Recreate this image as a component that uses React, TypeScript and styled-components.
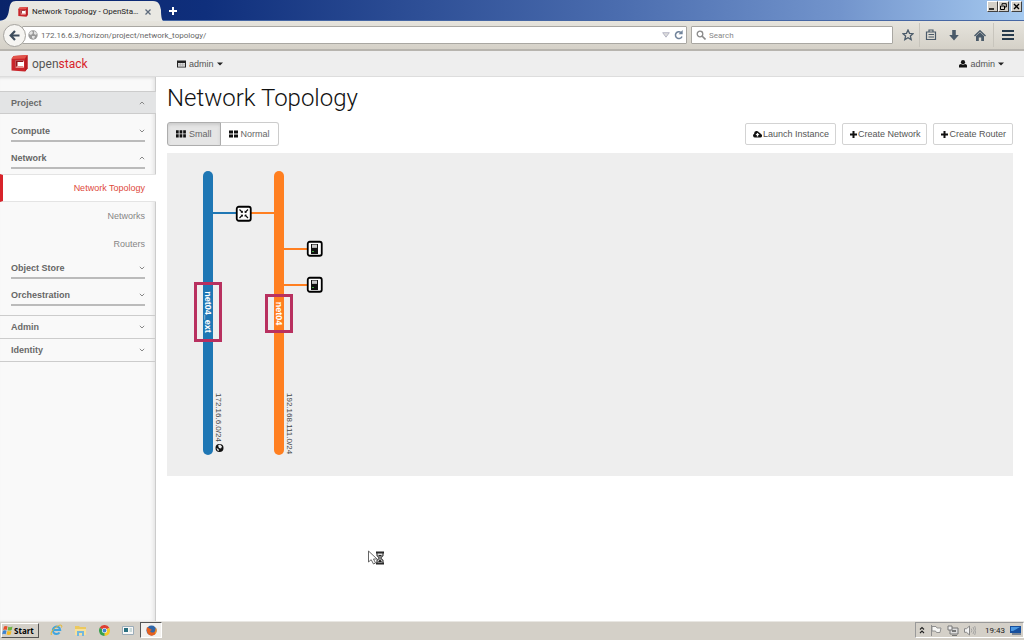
import React from 'react';
import styled, { createGlobalStyle, css } from 'styled-components';

const GlobalStyle = createGlobalStyle`
  *, *::before, *::after { box-sizing: border-box; }
  body { margin: 0; background: #fff; font-family: "Liberation Sans", Arial, sans-serif; font-size: 9px; color: #555; }
  button, input { font: inherit; color: inherit; }
  button { padding: 0; margin: 0; border: 0; background: none; }
  a { color: inherit; text-decoration: none; }
  ul { list-style: none; margin: 0; padding: 0; }
  svg { display: block; flex: none; }
`;

const uiFont = 'Roboto, "Open Sans", sans-serif';

const Screen = styled.div`
  min-height: 100vh;
  display: flex;
  flex-direction: column;
`;

/* Browser window */
const TitleBar = styled.header`
  height: 21px;
  display: flex;
  align-items: flex-end;
  background: linear-gradient(90deg, #0a246a 0%, #0f2f7c 20%, #4a6cae 60%, #7294cc 82%, #a6caf0 100%);
  border-bottom: 1px solid #4667a4;
  font-family: ${uiFont};
`;
const Tab = styled.div`
  position: relative;
  width: 163px;
  height: 21px;
  margin-bottom: -1px;
  display: flex;
  align-items: center;
  font-size: 8px;
  color: #222;
`;
const TabShape = styled.svg`
  position: absolute;
  inset: 0;
`;
const TabContent = styled.div`
  position: relative;
  flex: 1;
  display: flex;
  align-items: center;
  gap: 4px;
  padding: 2px 12px 0 18px;
`;
const TabTitle = styled.span`
  flex: 1;
  white-space: nowrap;
`;
const IconButton = styled.button`
  display: flex;
  align-items: center;
  justify-content: center;
`;
const NewTab = styled(IconButton)`
  width: 20px;
  height: 18px;
`;
const WindowButtons = styled.div`
  margin-left: auto;
  align-self: flex-start;
  display: flex;
  padding: 1px 2px 0 0;
`;
const WindowButton = styled.button<{ $apart?: boolean }>`
  width: 11px;
  height: 11px;
  margin-left: ${p => (p.$apart ? 2 : 0)}px;
  display: flex;
  align-items: center;
  justify-content: center;
  background: #d4d0c8;
  border: 1px solid;
  border-color: #fff #404040 #404040 #fff;
`;
const Toolbar = styled.nav`
  height: 30px;
  display: flex;
  align-items: center;
  padding: 0 3px;
  background: linear-gradient(#e6e4dd, #d5d1c8);
  border-bottom: 2px solid #b7b4ae;
  font-family: ${uiFont};
  font-size: 8px;
`;
const BackButton = styled(IconButton)`
  position: relative;
  z-index: 1;
  width: 23px;
  height: 23px;
  border: 1px solid #a5a39e;
  border-radius: 50%;
  background: #f6f5f2;
`;
const Field = styled.label<{ $url?: boolean }>`
  height: 18px;
  display: flex;
  align-items: center;
  gap: 3px;
  background: #fff;
  border: 1px solid #a9a7a2;
  border-radius: 1px;
  ${p => p.$url
    ? css`flex: 1; margin-left: -4px; padding: 0 1px 0 5px;`
    : css`flex: 0 0 202px; margin-left: 4px; padding: 0 4px;`}
`;
const TextInput = styled.input`
  flex: 1;
  min-width: 0;
  height: 16px;
  padding: 0;
  border: 0;
  outline: 0;
  background: transparent;
  color: #666;
  &::placeholder { color: #888; opacity: 1; }
`;
const ToolButtons = styled.div`
  display: flex;
  align-items: center;
  margin-left: 4px;
`;
const ToolButton = styled(IconButton)<{ $width: number; $divided?: boolean }>`
  width: ${p => p.$width}px;
  height: 24px;
  border-left: ${p => (p.$divided ? '1px solid #c8c5bd' : '0')};
`;

/* Dashboard */
const TopBar = styled.header`
  height: 26px;
  display: flex;
  align-items: center;
  padding: 0 20px 0 11px;
  background: #eee;
  border-bottom: 1px solid #ddd;
`;
const Brand = styled.a`
  width: 166px;
  display: flex;
  align-items: center;
  gap: 4px;
  font: 12px Roboto, "Liberation Sans", sans-serif;
  line-height: 18px;
`;
const Stack = styled.span`
  color: #d8232a;
`;
const MenuButton = styled.button<{ $end?: boolean }>`
  display: flex;
  align-items: center;
  gap: 3px;
  margin-left: ${p => (p.$end ? 'auto' : '0')};
`;
const Body = styled.div`
  flex: 1;
  display: flex;
`;
const Sidebar = styled.nav`
  flex: 0 0 156px;
  padding-top: 14px;
  background: #f9f9f9;
  box-shadow: inset -1px 0 #ccc, inset -4px 0 4px -2px #ddd, inset 0 3px 3px -2px #ddd;
`;
const PanelButton = styled.button<{ $open?: boolean }>`
  width: 100%;
  height: 23px;
  display: flex;
  align-items: center;
  justify-content: space-between;
  padding: 0 11px;
  font-weight: bold;
  color: #6a6a6a;
  border-top: 1px solid #ccc;
  ${p => p.$open && css`
    background: #e3e4e5;
    border-bottom: 1px solid #ccc;
  `}
`;
const PanelFoot = styled.div`
  border-top: 1px solid #ccc;
`;
const Groups = styled.div`
  padding: 8px 0 2px;
`;
const GroupButton = styled.button<{ $open?: boolean }>`
  width: calc(100% - 22px);
  height: 20px;
  display: flex;
  align-items: center;
  justify-content: space-between;
  margin: 0 11px ${p => (p.$open ? 0 : 7)}px;
  font-weight: bold;
  color: #666;
  border-bottom: 2px solid #bbb;
`;
const Links = styled.ul`
  padding: 5px 0 1px;
`;
const SideLink = styled.a<{ $active?: boolean }>`
  height: 28px;
  display: flex;
  align-items: center;
  justify-content: flex-end;
  padding: 0 11px;
  color: #868686;
  ${p => p.$active && css`
    color: #de4a3c;
    background: #fff;
    border-left: 3px solid #d8232a;
    border-bottom: 1px solid #e4e4e4;
    border-top: 1px solid #e4e4e4;
  `}
`;
const Main = styled.main`
  flex: 1;
  min-width: 0;
  padding: 5px 11px;
`;
const Title = styled.h1`
  margin: 0;
  font: 300 24px Roboto, sans-serif;
  line-height: 32px;
  color: #111;
`;
const Actions = styled.div`
  display: flex;
  align-items: center;
  justify-content: space-between;
  margin: 8px 0 7px;
`;
const ButtonRow = styled.div<{ $gap?: number }>`
  display: flex;
  gap: ${p => p.$gap ?? 0}px;
`;
const SizeButton = styled.button<{ $pressed?: boolean }>`
  height: 24px;
  display: flex;
  align-items: center;
  gap: 3px;
  padding: 0 8px;
  border: 1px solid #ccc;
  border-radius: 0 3px 3px 0;
  color: #666;
  background: #fff;
  & + & { border-left: 0; }
  ${p => p.$pressed && css`
    background: #e5e5e5;
    border-color: #adadad;
    border-radius: 3px 0 0 3px;
    box-shadow: inset 0 2px 3px #ccc;
  `}
`;
const ActionButton = styled.button`
  height: 22px;
  display: flex;
  align-items: center;
  gap: 1px;
  padding: 0 6px 0 7px;
  border: 1px solid #d3d3d3;
  border-radius: 2px;
  background: #fff;
  color: #555;
`;
const Canvas = styled.section`
  position: relative;
  height: 323px;
  background: #eee;
`;

/* Desktop */
const TaskBar = styled.footer`
  height: 19px;
  display: flex;
  align-items: center;
  padding-bottom: 2px;
  background: #d4d0c8;
  border-top: 1px solid #e9e7e3;
  font-family: ${uiFont};
`;
const StartButton = styled.button`
  height: 15px;
  width: 38px;
  display: flex;
  align-items: center;
  gap: 1px;
  margin: 0 5px 0 1px;
  border: 1px solid;
  border-color: #fff #555 #555 #fff;
  font-family: "Open Sans", sans-serif;
  font-size: 8px;
  font-weight: bold;
  color: #000;
`;
const TaskButton = styled(IconButton)<{ $running?: boolean }>`
  width: ${p => (p.$running ? 22 : 24)}px;
  height: 16px;
  ${p => p.$running && css`
    background: #f3f1ee;
    border: 1px solid;
    border-color: #555 #fff #fff #555;
  `}
`;
const Tray = styled.div`
  margin-left: auto;
  height: 16px;
  display: flex;
  align-items: center;
  gap: 5px;
  padding: 0 2px 0 3px;
  border: 1px solid;
  border-color: #999 #fff #fff #999;
  color: #222;
  font-size: 8px;
`;
const Clock = styled.time`
  padding-left: 4px;
`;
const Pointer = styled.svg`
  position: fixed;
  left: 367px;
  top: 549px;
`;

const StackLogo = ({ size }: { size: number }) => (
  <svg width={size} height={size} viewBox="0 0 17 17">
    <path d="M2.500 1 16.500 0 16.500 13.500 14 16.500 .5 15.500 .5 4Z" fill="#c9252b" />
    <path d="M2.500 1 16.500 0 14 3.500 .5 4Z" fill="#e2544b" />
    <path d="M14 3.500 16.500 0 16.500 13.500 14 16.500Z" fill="#b81c22" />
    <path d="M4.500 5.500H13V12.500H4.500Z" fill="#fff" />
    <path d="M4.500 5.500H13L12 7H6.500V11L4.500 12.500Z" fill="#931419" />
    <path d="M4.500 12.500 6.500 11H12L13 12.500Z" fill="#e98c86" />
  </svg>
);
const Caret = () => <svg width="6" height="4" viewBox="0 0 6 4"><path d="M0 .5h6L3 3.5z" fill="#222" /></svg>;
const Chevron = ({ up }: { up?: boolean }) => (
  <svg width="6" height="4" viewBox="0 0 6 4">
    <path d={up ? 'M.8 3.2 3 1 5.200 3.2' : 'M.8.8 3 3 5.200.8'} fill="none" stroke="#888" />
  </svg>
);
const Globe = ({ size = 10 }: { size?: number }) => (
  <svg width={size} height={size} viewBox="0 0 10 10">
    <circle cx="5" cy="5" r="4.700" fill="#9a9a9a" />
    <path d="M2 2 4 1 5 3 3 5 1 4ZM6 1 9 3 8 5 6 4ZM4 6 7 6 6 9 4 8Z" fill="#e3e3e3" />
  </svg>
);
const Plus = () => <svg width="7" height="7" viewBox="0 0 7 7"><path d="M3.500 0v7M0 3.500h7" stroke="#111" strokeWidth="2" /></svg>;

type Network = { x: number; color: string; name: string; cidr: string; boxY: number; boxH: number };
const networks: Network[] = [
  { x: 36, color: '#1f77b4', name: 'net04_ext', cidr: '172.16.6.0/24', boxY: 130.5, boxH: 57 },
  { x: 107, color: '#ff7f20', name: 'net04', cidr: '192.168.111.0/24', boxY: 142.5, boxH: 36 },
];
const servers = [96, 132];

const Topology = () => (
  <svg width="180" height="323" viewBox="0 0 180 323" role="img" aria-label="Network topology">
    <path d="M45 60h24" stroke="#1f77b4" strokeWidth="2" />
    <path d="M84 60h24" stroke="#ff7f20" strokeWidth="2" />
    {networks.map(n => (
      <g key={n.name}>
        <rect x={n.x} y="18" width="10" height="284" rx="5" fill={n.color} />
        <rect x={n.x - 7.5} y={n.boxY} width="25" height={n.boxH} fill="none" stroke="#b8305f" strokeWidth="3" />
        <text transform={`translate(${n.x + 2} ${n.boxY + n.boxH / 2}) rotate(90)`} textAnchor="middle" fontSize="9" fontWeight="bold" fill="#fff">{n.name}</text>
        <text transform={`translate(${n.x + 13} 240) rotate(90)`} fontSize="8" fill="#444">{n.cidr}</text>
      </g>
    ))}
    <circle cx="52.500" cy="295" r="4" fill="#111" />
    <path d="M51 292.500l2-1 2 2-1 2-2-.500zM49.500 295l2 1 .500 2-1.500-.500z" fill="#eee" />
    <g transform="translate(69 53)">
      <rect x=".75" y=".75" width="14" height="14" rx="2" fill="#fff" stroke="#000" strokeWidth="1.800" />
      <path d="M3.500 3.500l3 3M12 3.500l-3 3M3.500 12l3-3M12 12l-3-3" stroke="#111" strokeWidth="1.200" />
      <path d="M6.800 4.500v2.300H4.500zM8.700 4.500v2.300H11zM6.800 11V8.700H4.500zM8.700 11V8.700H11z" fill="#111" />
    </g>
    {servers.map(y => (
      <g key={y} transform={`translate(140 ${y - 8})`}>
        <path d="M-23 8H1" stroke="#ff7f20" strokeWidth="2" />
        <rect x=".75" y=".75" width="14" height="14" rx="2" fill="#fff" stroke="#000" strokeWidth="1.800" />
        <rect x="4" y="3" width="7" height="10" fill="#111" />
        <path d="M5 3.500h5v3.500H5z" fill="#b0b0b0" />
        <path d="M5 5h5" stroke="#e4e4e4" />
        <path d="M5 10.500h2" stroke="#3ca63c" />
      </g>
    ))}
  </svg>
);

export default function App() {
  return (
    <Screen>
      <GlobalStyle />
      <TitleBar>
        <Tab>
          <TabShape width="163" height="21" viewBox="0 0 163 21">
            <path d="M0 21C6 20 8 17 9 10 10 4 11 1 16 1H153C159 1 160 5 161 10 161 17 162 20 163 21Z" fill="#e9e8e3" />
          </TabShape>
          <TabContent>
            <StackLogo size={10} />
            <TabTitle>Network Topology - OpenSta…</TabTitle>
            <IconButton aria-label="Close tab">
              <svg width="6" height="6" viewBox="0 0 6 6"><path d="M.5.5l5 5M5.500.5l-5 5" stroke="#5d6b7c" strokeWidth="1.300" /></svg>
            </IconButton>
          </TabContent>
        </Tab>
        <NewTab aria-label="New tab">
          <svg width="8" height="8" viewBox="0 0 8 8"><path d="M4 0v8M0 4h8" stroke="#fff" strokeWidth="2" /></svg>
        </NewTab>
        <WindowButtons>
          <WindowButton aria-label="Minimize"><svg width="7" height="7" viewBox="0 0 7 7"><path d="M0 6h5" stroke="#000" strokeWidth="1.500" /></svg></WindowButton>
          <WindowButton aria-label="Restore"><svg width="7" height="7" viewBox="0 0 7 7"><path d="M2 2V.7h4.300V4H5M.5 3h4v3.500h-4z" fill="none" stroke="#000" /></svg></WindowButton>
          <WindowButton $apart aria-label="Close"><svg width="7" height="7" viewBox="0 0 7 7"><path d="M1 1l5 5M6 1 1 6" stroke="#000" strokeWidth="1.300" /></svg></WindowButton>
        </WindowButtons>
      </TitleBar>
      <Toolbar aria-label="Browser">
        <BackButton aria-label="Back">
          <svg width="11" height="11" viewBox="0 0 11 11"><path d="M6 1 1.700 5.500 6 10M2 5.500h8.500" fill="none" stroke="#3d4c5c" strokeWidth="2.200" /></svg>
        </BackButton>
        <Field $url>
          <Globe />
          <TextInput aria-label="Address" defaultValue="172.16.6.3/horizon/project/network_topology/" />
          <svg width="8" height="6" viewBox="0 0 8 6"><path d="M.7.7h6.600L4 5.200z" fill="#ddd" stroke="#aab" strokeWidth=".8" /></svg>
          <IconButton aria-label="Reload">
            <svg width="12" height="10" viewBox="0 0 12 10"><path d="M8 2.500A3.400 3.400 0 1 0 9 6.500" fill="none" stroke="#71849b" strokeWidth="1.500" /><path d="M9.700 0v4.300H5.500z" fill="#71849b" /></svg>
          </IconButton>
        </Field>
        <Field>
          <svg width="10" height="10" viewBox="0 0 10 10"><circle cx="4" cy="4" r="2.800" fill="none" stroke="#8a8a8a" strokeWidth="1.300" /><path d="M6 6l3.500 3.500" stroke="#8a8a8a" strokeWidth="1.600" /></svg>
          <TextInput aria-label="Search the web" placeholder="Search" />
        </Field>
        <ToolButtons>
          <ToolButton $width={22} aria-label="Bookmark">
            <svg width="12" height="12" viewBox="0 0 12 12"><path d="M6 1l1.500 3.300 3.600.4-2.700 2.400.8 3.500L6 8.800l-3.200 1.800.8-3.500L.9 4.700l3.600-.4z" fill="none" stroke="#4a5a69" strokeWidth="1.300" /></svg>
          </ToolButton>
          <ToolButton $width={22} $divided aria-label="Bookmarks list">
            <svg width="12" height="12" viewBox="0 0 12 12"><path d="M1.500 3h9v7.500h-9zM4 3V1h4v2M3.500 5.500h5.500M3.500 8h5.500" fill="none" stroke="#4a5a69" strokeWidth="1.200" /></svg>
          </ToolButton>
          <ToolButton $width={26} aria-label="Downloads">
            <svg width="10" height="11" viewBox="0 0 10 11"><path d="M3.200 0h3.600v5h3L5 10.500.2 5h3z" fill="#4a5a69" /></svg>
          </ToolButton>
          <ToolButton $width={26} aria-label="Home">
            <svg width="12" height="11" viewBox="0 0 12 11"><path d="M.5 6 6 .8 11.500 6" fill="none" stroke="#4a5a69" strokeWidth="1.400" /><path d="M2 6l4-3.700L10 6v5H7.200V7.500H4.800V11H2z" fill="#4a5a69" /></svg>
          </ToolButton>
          <ToolButton $width={28} $divided aria-label="Menu">
            <svg width="12" height="10" viewBox="0 0 12 10"><path d="M0 1h12M0 5h12M0 9h12" stroke="#263b4d" strokeWidth="1.800" /></svg>
          </ToolButton>
        </ToolButtons>
      </Toolbar>

      <TopBar>
        <Brand href="#"><StackLogo size={17} /><span>open<Stack>stack</Stack></span></Brand>
        <MenuButton>
          <svg width="9" height="8" viewBox="0 0 9 8"><path d="M0 .5h9v7H0z" fill="#222" /><path d="M1 3h7v3.700H1z" fill="#ddd" /><path d="M1 4.800h7M3.300 3v3.500M5.700 3v3.500" stroke="#999" strokeWidth=".5" /></svg>
          admin<Caret />
        </MenuButton>
        <MenuButton $end>
          <svg width="8" height="8" viewBox="0 0 8 8"><circle cx="4" cy="2.200" r="2.100" fill="#111" /><path d="M0 7.500V5.500Q0 4 2 4 4 5.500 6 4 8 4 8 5.500V7.500z" fill="#111" /></svg>
          admin<Caret />
        </MenuButton>
      </TopBar>

      <Body>
        <Sidebar aria-label="Dashboard">
          <PanelButton $open>Project<Chevron up /></PanelButton>
          <Groups>
            <GroupButton>Compute<Chevron /></GroupButton>
            <GroupButton $open>Network<Chevron up /></GroupButton>
            <Links>
              <li><SideLink href="#" $active>Network Topology</SideLink></li>
              <li><SideLink href="#">Networks</SideLink></li>
              <li><SideLink href="#">Routers</SideLink></li>
            </Links>
            <GroupButton>Object Store<Chevron /></GroupButton>
            <GroupButton>Orchestration<Chevron /></GroupButton>
          </Groups>
          <PanelButton>Admin<Chevron /></PanelButton>
          <PanelButton>Identity<Chevron /></PanelButton>
          <PanelFoot />
        </Sidebar>
        <Main>
          <Title>Network Topology</Title>
          <Actions>
            <ButtonRow>
              <SizeButton $pressed>
                <svg width="10" height="8" viewBox="0 0 10 8"><path d="M0 .2h2.700v3.300H0zM3.600.2h2.700v3.300H3.600zM7.200.2h2.700v3.300H7.200zM0 4.300h2.700v3.300H0zM3.600 4.300h2.700v3.300H3.600zM7.200 4.300h2.700v3.300H7.200z" fill="#111" /></svg>
                Small
              </SizeButton>
              <SizeButton>
                <svg width="9" height="8" viewBox="0 0 9 8"><path d="M0 .5h4v3H0zM5 .5h4v3H5zM0 4.500h4v3H0zM5 4.500h4v3H5z" fill="#111" /></svg>
                Normal
              </SizeButton>
            </ButtonRow>
            <ButtonRow $gap={6}>
              <ActionButton>
                <svg width="9" height="8" viewBox="0 0 9 8"><path d="M2 7.500A2 2 0 0 1 1.200 3.700 2.500 2.500 0 0 1 6 2.500 2 2 0 0 1 7.800 4 1.800 1.800 0 0 1 7 7.500z" fill="#111" /><path d="M4.500 2.800l2 2.200H5.200v1.600H3.800V5H2.500z" fill="#fff" /></svg>
                Launch Instance
              </ActionButton>
              <ActionButton><Plus />Create Network</ActionButton>
              <ActionButton><Plus />Create Router</ActionButton>
            </ButtonRow>
          </Actions>
          <Canvas><Topology /></Canvas>
        </Main>
      </Body>

      <TaskBar>
        <StartButton>
          <svg width="11" height="11" viewBox="0 0 11 11"><path d="M2 1.500q2-1 3.500 0L4.700 5Q3 4 1.200 5z" fill="#e8502a" /><path d="M6.300 1.800Q8 2.700 10.500 1.500L9.700 5q-2 1-4.100.2z" fill="#6cb33f" /><path d="M1 5.700q2-1 3.500 0L3.700 9.300Q2 8.300.2 9.300z" fill="#3b82d0" /><path d="M5.400 6.100q2 .8 4.100 0L8.700 9.500q-2 .9-4.100 0z" fill="#f5b921" /></svg>
          Start
        </StartButton>
        <TaskButton aria-label="Internet Explorer">
          <svg width="13" height="12" viewBox="0 0 13 12"><path d="M9.500 8.500A3.700 3.700 0 1 1 10.200 6H4" fill="none" stroke="#3fa5e0" strokeWidth="2" /><path d="M1.500 11C0 9 3 5 7 2.500S12.500 1 11.500 3.500" fill="none" stroke="#e5b82e" /></svg>
        </TaskButton>
        <TaskButton aria-label="File Explorer">
          <svg width="13" height="11" viewBox="0 0 13 11"><path d="M1 1h4l1 1h6v8H1z" fill="#ecc95e" /><path d="M1 4h11v6H1z" fill="#f7e09a" /><path d="M3 6h7v5H8V8H5v3H3z" fill="#73b7dd" /></svg>
        </TaskButton>
        <TaskButton aria-label="Chrome">
          <svg width="11" height="11" viewBox="0 0 11 11"><path d="M5.500 5.500.7 2.800A5.500 5.500 0 0 1 10.300 2.800z" fill="#df4032" /><path d="M5.500 5.500 10.300 2.800A5.500 5.500 0 0 1 5.500 11z" fill="#f6c928" /><path d="M5.500 5.500V11A5.500 5.500 0 0 1 .7 2.800z" fill="#38a04c" /><circle cx="5.500" cy="5.500" r="2.500" fill="#fff" /><circle cx="5.500" cy="5.500" r="1.900" fill="#4283d4" /></svg>
        </TaskButton>
        <TaskButton aria-label="Console">
          <svg width="12" height="9" viewBox="0 0 12 9"><path d="M.5.5h11v8H.5z" fill="#f8f8f8" stroke="#9bacb8" /><path d="M2 2h4v4H2z" fill="#2a7080" /><path d="M7.500 3H10M7.500 5H10" stroke="#9bb" /></svg>
        </TaskButton>
        <TaskButton $running aria-label="Firefox">
          <svg width="11" height="11" viewBox="0 0 11 11"><circle cx="5.500" cy="5.500" r="5" fill="#3167a8" /><path d="M1 2Q0 6 2 9 5.500 12 9 9.500 12 6 9.700 2.500 10 6 7.500 7.500 5 8 4 6L6 5 3.500 3.500z" fill="#e7601e" /><path d="M9.700 2.500Q11.500 6 9 9.500 10 6 9.700 2.500z" fill="#f9bc2d" /></svg>
        </TaskButton>
        <Tray>
          <svg width="6" height="8" viewBox="0 0 6 8"><path d="M1 3.500l2-2 2 2M1 7l2-2 2 2" fill="none" stroke="#222" strokeWidth="1.100" /></svg>
          <svg width="12" height="11" viewBox="0 0 12 11"><path d="M1.500 0v11M2 1.500h4l1 1.500h4l-1 4.500H6.500l-1-1.500H2z" fill="#f7f7f5" stroke="#888" strokeWidth=".9" /></svg>
          <svg width="12" height="11" viewBox="0 0 12 11"><path d="M3 3h8v6H3zM5 10.500h5" fill="#ddd" stroke="#777" /><path d="M1 1h4v4H1z" fill="#eee" stroke="#777" /><path d="M5 5h4v2H5z" fill="#777" /></svg>
          <svg width="12" height="11" viewBox="0 0 12 11"><path d="M.5 3.700h2L5.500 1v9L2.500 7.300h-2z" fill="#f4f4f4" stroke="#888" /><path d="M7.200 3.500q1.300 2 0 4M9 2q2.500 3.500 0 7M10.700 1q2.500 4.500 0 9" fill="none" stroke="#999" strokeWidth=".8" /></svg>
          <Clock>19:43</Clock>
          <svg width="11" height="10" viewBox="0 0 11 10"><path d="M0 1h11v7H0z" fill="#174f9d" /><path d="M1 2h9L3 6H1z" fill="#4b98e1" /><path d="M2 9h9" stroke="#5b6b80" strokeWidth="1.500" /></svg>
        </Tray>
      </TaskBar>

      <Pointer width="19" height="18" viewBox="0 0 19 18" aria-hidden="true">
        <path d="M1.500 2v11l2.700-2.300L6.500 15l2-1-2-4H10z" fill="#fff" stroke="#555" strokeWidth=".9" />
        <path d="M9 3.500h8M9 14.500h8" stroke="#222" strokeWidth="1.800" />
        <path d="M10 4h6v2.500L13.700 9 16 11.500V14h-6v-2.500L12.300 9 10 6.500z" fill="#ddd" stroke="#333" strokeWidth="1.100" />
        <path d="M11 6h4l-2 2zM11 13l2-3 2 3z" fill="#222" />
      </Pointer>
    </Screen>
  );
}
